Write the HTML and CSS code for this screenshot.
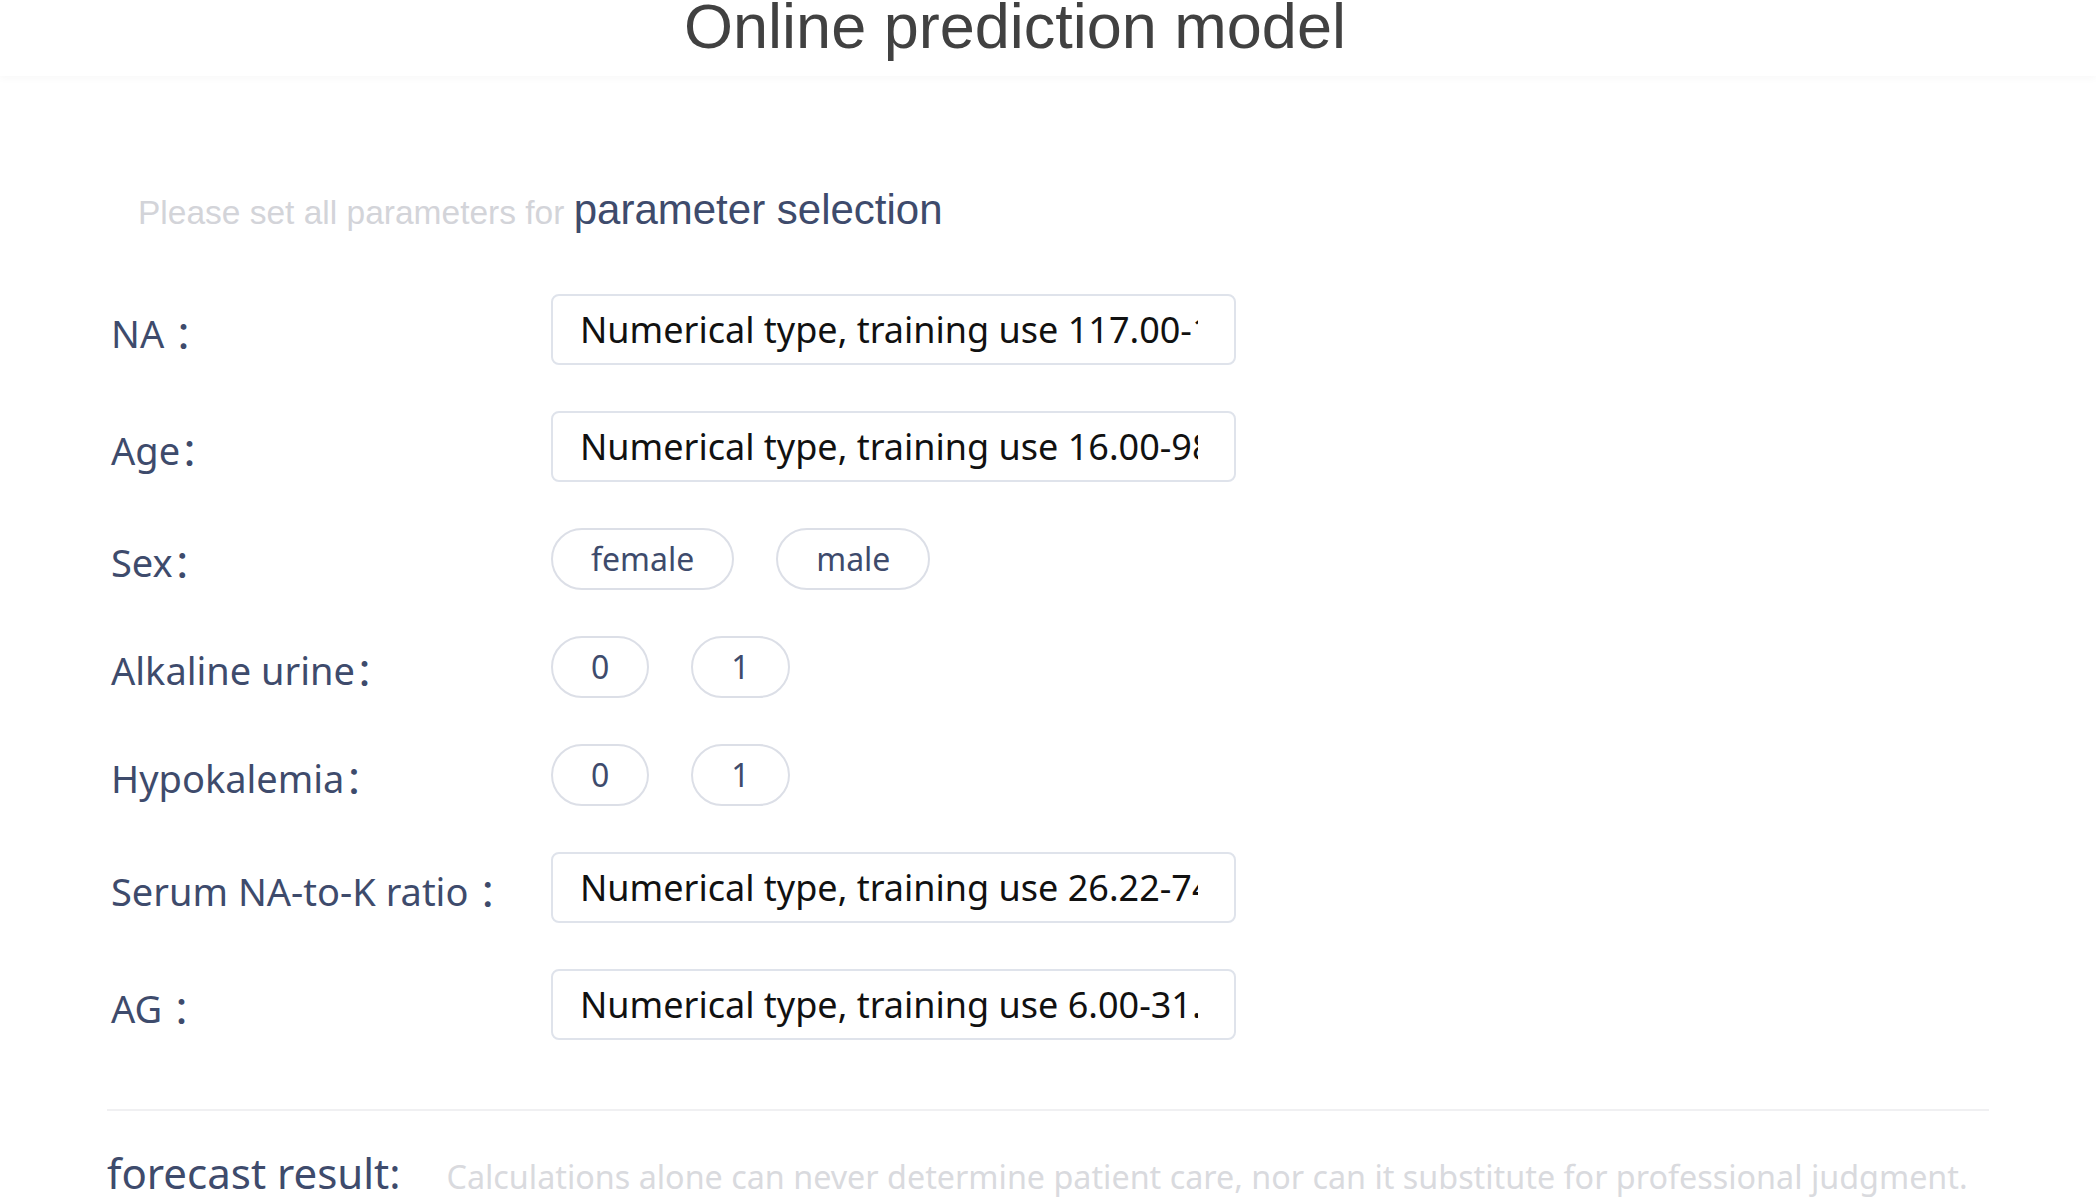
FILE: index.html
```html
<!DOCTYPE html>
<html lang="en">
<head>
<meta charset="utf-8">
<title>Online prediction model</title>
<link rel="stylesheet" href="styles.css">
</head>
<body>
<header class="topbar">
  <h1 class="title">Online prediction model</h1>
</header>
<main class="content">
  <p class="intro"><span class="hint">Please set all parameters for </span><span class="heading">parameter selection</span></p>
  <form class="form">
    <div class="row">
      <label class="label">NA ：</label>
      <input class="field" type="text" placeholder="Numerical type, training use 117.00-156.00">
    </div>
    <div class="row">
      <label class="label">Age：</label>
      <input class="field" type="text" placeholder="Numerical type, training use 16.00-98.00">
    </div>
    <div class="row">
      <label class="label">Sex：</label>
      <div class="choices">
        <span class="pill">female</span>
        <span class="pill">male</span>
      </div>
    </div>
    <div class="row">
      <label class="label">Alkaline urine：</label>
      <div class="choices">
        <span class="pill">0</span>
        <span class="pill">1</span>
      </div>
    </div>
    <div class="row">
      <label class="label">Hypokalemia：</label>
      <div class="choices">
        <span class="pill">0</span>
        <span class="pill">1</span>
      </div>
    </div>
    <div class="row">
      <label class="label">Serum NA-to-K ratio ：</label>
      <input class="field" type="text" placeholder="Numerical type, training use 26.22-74.00">
    </div>
    <div class="row">
      <label class="label">AG ：</label>
      <input class="field" type="text" placeholder="Numerical type, training use 6.00-31.00">
    </div>
  </form>
  <hr class="divider">
  <div class="result">
    <span class="result-label">forecast result:</span>
    <span class="note">Calculations alone can never determine patient care, nor can it substitute for professional judgment.</span>
  </div>
</main>
</body>
</html>
```

FILE: styles.css
```css
html, body {
  margin: 0;
  padding: 0;
  background: #ffffff;
}

body {
  font-family: "Noto Sans", "Noto Sans CJK SC", sans-serif;
  color: #3e4b6c;
  overflow: hidden;
}

.topbar {
  height: 76px;
  padding-right: 66px;
  background: #ffffff;
  box-shadow: 0 2px 8px rgba(0, 0, 0, 0.035);
  text-align: center;
  overflow: hidden;
}

.title {
  margin: -5px 0 0 0;
  font-family: "Liberation Sans", Arial, sans-serif;
  font-weight: normal;
  font-size: 63px;
  line-height: 63px;
  color: #414141;
}

.content {
  margin: 0 107px;
}

.intro {
  margin: 106px 0 0 0;
  padding-left: 31px;
  font-family: "Liberation Sans", Arial, sans-serif;
  line-height: 56px;
}

.hint {
  font-size: 33.5px;
  color: #d3d4d9;
}

.heading {
  font-size: 42px;
  color: #3e4b6c;
}

.form {
  margin-top: 47px;
}

.row {
  display: flex;
  align-items: center;
  margin-bottom: 46px;
}

.label {
  width: 444px;
  padding-left: 4px;
  padding-top: 3px;
  box-sizing: border-box;
  font-size: 38px;
  color: #3e4b6c;
  white-space: nowrap;
}

.field {
  width: 685px;
  height: 71px;
  box-sizing: border-box;
  border: 2px solid #dfe3eb;
  border-radius: 8px;
  padding: 0 36px 0 27px;
  font-family: "Noto Sans", "Noto Sans CJK SC", sans-serif;
  font-size: 36px;
  color: #111111;
  background: #ffffff;
  outline: none;
}

.field::placeholder {
  color: #111111;
  opacity: 1;
}

.choices {
  display: flex;
  gap: 42px;
}

.pill {
  height: 62px;
  box-sizing: border-box;
  padding: 0 38px;
  border: 2px solid #dcdfe7;
  border-radius: 31px;
  font-size: 32px;
  line-height: 58px;
  color: #3e4b6c;
}

.divider {
  margin: 69px 0 0 0;
  border: 0;
  height: 2px;
  background: #f0f0f2;
}

.result {
  display: flex;
  align-items: baseline;
  margin-top: 33px;
  line-height: 58px;
  white-space: nowrap;
}

.result-label {
  font-size: 42px;
  color: #3e4b6c;
}

.note {
  margin-left: 46px;
  font-size: 32.3px;
  color: #d9dade;
}
```
